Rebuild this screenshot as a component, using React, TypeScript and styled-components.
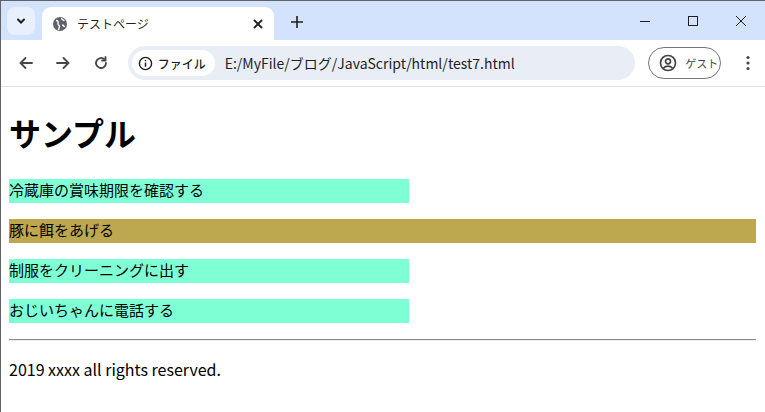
import { createGlobalStyle } from 'styled-components';
import styled from 'styled-components';

const Global = createGlobalStyle`
  html, body { margin: 0; padding: 0; background: #fff; }
  body { font-family: "Noto Sans CJK JP", sans-serif; overflow: hidden; }
`;

const Frame = styled.div`
  width: 765px;
  height: 412px;
  box-sizing: border-box;
  border: 1px solid #5f6368;
  border-bottom: none;
  border-right: none;
  display: flex;
  flex-direction: column;
  background: #fff;
`;

const TabStrip = styled.div`
  height: 39px;
  background: #d3e3fd;
  display: flex;
  align-items: flex-end;
  padding-left: 6px;
`;

const TabMenu = styled.div`
  width: 28px;
  height: 28px;
  margin-bottom: 5px;
  border-radius: 8px;
  background: #e9f0fd;
  display: flex;
  align-items: center;
  justify-content: center;
`;

const Tab = styled.div`
  width: 232px;
  height: 33px;
  margin-left: 7px;
  background: #fff;
  border-radius: 9px 9px 0 0;
  display: flex;
  align-items: center;
  padding: 0 10px;
  box-sizing: border-box;
  font-size: 12px;
  color: #1f1f1f;
  gap: 9px;
`;

const TabTitle = styled.span`
  flex: 1;
`;

const NewTab = styled.div`
  width: 30px;
  height: 30px;
  margin: 0 0 3px 8px;
  display: flex;
  align-items: center;
  justify-content: center;
`;

const WinControls = styled.div`
  margin-left: auto;
  align-self: stretch;
  display: flex;
`;

const WinBtn = styled.div`
  width: 48px;
  display: flex;
  align-items: center;
  justify-content: center;
`;

const Toolbar = styled.div`
  height: 46px;
  display: flex;
  align-items: center;
  padding-left: 8px;
  gap: 4px;
  border-bottom: 1px solid #e3e3e3;
`;

const NavBtn = styled.div`
  width: 34px;
  height: 34px;
  display: flex;
  align-items: center;
  justify-content: center;
`;

const Omnibox = styled.div`
  width: 514px;
  height: 34px;
  margin-left: 6px;
  border-radius: 17px;
  background: #e9eef6;
  display: flex;
  align-items: center;
  padding-left: 4px;
  box-sizing: border-box;
  font-size: 14px;
  color: #1f1f1f;
`;

const Chip = styled.div`
  height: 26px;
  padding: 0 9px 0 6px;
  border-radius: 13px;
  background: #fff;
  display: flex;
  align-items: center;
  gap: 5px;
  font-size: 12px;
  font-weight: 500;
  margin-right: 10px;
`;

const Guest = styled.div`
  margin-left: 9px;
  height: 32px;
  width: 74px;
  box-sizing: border-box;
  border: 1px solid #747775;
  border-radius: 16px;
  display: flex;
  align-items: center;
  padding-left: 10px;
  gap: 8px;
  font-size: 11px;
  color: #444;
`;

const Page = styled.div`
  padding: 8px;
  font-size: 16px;
  color: #000;
  font-family: "Noto Sans CJK JP", sans-serif;
`;

const Title = styled.h1`
  font-size: 32px;
  font-weight: bold;
  margin: 14px 0 24px;
  line-height: 46px;
`;

const Item = styled.div<{ $bg: string; $full?: boolean }>`
  background: ${p => p.$bg};
  width: ${p => (p.$full ? '747px' : '400px')};
  height: 24px;
  line-height: 22px;
  margin-bottom: 16px;
  font-size: 15px;
`;

const Rule = styled.hr`
  width: 747px;
  margin: 0;
  margin-top: 0px;
  border: none;
  border-top: 1px solid #8a8a8a;
  border-bottom: 1px solid #eee;
`;

const Footer = styled.p`
  margin: 16px 0 0;
  font-size: 16px;
  font-family: "Noto Sans CJK JP", sans-serif;
`;

const ico = { fill: 'none', stroke: '#474747', strokeWidth: 1.8, strokeLinecap: 'round' as const };

const items = [
  { t: '冷蔵庫の賞味期限を確認する', bg: '#7fffd4' },
  { t: '豚に餌をあげる', bg: '#bda74f', full: true },
  { t: '制服をクリーニングに出す', bg: '#7fffd4' },
  { t: 'おじいちゃんに電話する', bg: '#7fffd4' },
];

export default function App() {
  return (
    <Frame>
      <Global />
      <TabStrip>
        <TabMenu>
          <svg width="12" height="12" viewBox="0 0 12 12"><path d="M3 4.5l3 3 3-3" {...ico} strokeWidth={2} stroke="#1f1f1f" /></svg>
        </TabMenu>
        <Tab>
          <svg width="16" height="16" viewBox="0 0 16 16">
            <circle cx="8" cy="8" r="7" fill="#5f6368" />
            <path d="M4 4.5c2 0 2.5 1.5 2 3s1.5 1.5 1.5 3-1 2-1 3.5M9.5 2c0 2 1.5 2 3 2.5M10 9c1 0 2 1 2.5 2" stroke="#fff" strokeWidth="1.4" fill="none" />
          </svg>
          <TabTitle>テストページ</TabTitle>
          <svg width="12" height="12" viewBox="0 0 12 12"><path d="M2 2l8 8M10 2l-8 8" stroke="#1f1f1f" strokeWidth="1.8" /></svg>
        </Tab>
        <NewTab>
          <svg width="14" height="14" viewBox="0 0 14 14"><path d="M7 1v12M1 7h12" stroke="#1f1f1f" strokeWidth="1.6" /></svg>
        </NewTab>
        <WinControls>
          <WinBtn><svg width="12" height="12" viewBox="0 0 12 12"><path d="M1 6.5h10" stroke="#1f1f1f" /></svg></WinBtn>
          <WinBtn><svg width="12" height="12" viewBox="0 0 12 12"><rect x="1.5" y="1.5" width="9" height="9" fill="none" stroke="#1f1f1f" /></svg></WinBtn>
          <WinBtn><svg width="12" height="12" viewBox="0 0 12 12"><path d="M1 1l10 10M11 1L1 11" stroke="#1f1f1f" /></svg></WinBtn>
        </WinControls>
      </TabStrip>
      <Toolbar>
        <NavBtn><svg width="16" height="16" viewBox="0 0 16 16"><path d="M14 8H2.5M7.5 3L2.5 8l5 5" {...ico} /></svg></NavBtn>
        <NavBtn><svg width="16" height="16" viewBox="0 0 16 16"><path d="M2 8h11.5M8.5 3l5 5-5 5" {...ico} /></svg></NavBtn>
        <NavBtn><svg width="16" height="16" viewBox="0 0 16 16"><path d="M13 8a5 5 0 1 1-1.5-3.6" {...ico} /><path d="M12.5 2v3.5H9" {...ico} /></svg></NavBtn>
        <Omnibox>
          <Chip>
            <svg width="15" height="15" viewBox="0 0 16 16"><circle cx="8" cy="8" r="6.5" fill="none" stroke="#1f1f1f" strokeWidth="1.5" /><path d="M8 7v4.5" stroke="#1f1f1f" strokeWidth="1.6" /><circle cx="8" cy="4.8" r="0.9" fill="#1f1f1f" /></svg>
            ファイル
          </Chip>
          E:/MyFile/ブログ/JavaScript/html/test7.html
        </Omnibox>
        <Guest>
          <svg width="18" height="18" viewBox="0 0 18 18"><circle cx="9" cy="9" r="7.5" fill="none" stroke="#444" strokeWidth="1.7" /><circle cx="9" cy="7.3" r="2.5" fill="none" stroke="#444" strokeWidth="1.7" /><path d="M4.5 14c2.5-2.5 6.5-2.5 9 0" fill="none" stroke="#444" strokeWidth="1.7" /></svg>
          ゲスト
        </Guest>
        <NavBtn style={{ marginLeft: 6 }}>
          <svg width="4" height="16" viewBox="0 0 4 16"><circle cx="2" cy="2.5" r="1.6" fill="#474747" /><circle cx="2" cy="8" r="1.6" fill="#474747" /><circle cx="2" cy="13.5" r="1.6" fill="#474747" /></svg>
        </NavBtn>
      </Toolbar>
      <Page>
        <Title>サンプル</Title>
        {items.map(i => (
          <Item key={i.t} $bg={i.bg} $full={i.full}>{i.t}</Item>
        ))}
        <Rule />
        <Footer>2019 xxxx all rights reserved.</Footer>
      </Page>
    </Frame>
  );
}
